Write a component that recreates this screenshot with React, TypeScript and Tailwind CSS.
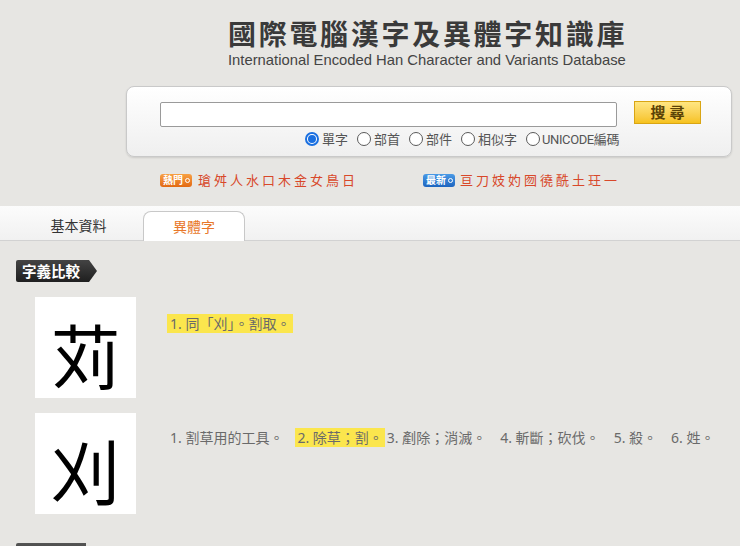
const CJK = "font-['Noto_Sans','Noto_Sans_CJK_TC',sans-serif]";

const HOT = ["瑲", "舛", "人", "水", "口", "木", "金", "女", "鳥", "日"];
const NEW = ["亘", "刀", "妓", "妁", "囫", "徺", "酰", "土", "玨", "一"];

function Radio({ checked, label }: { checked?: boolean; label: string }) {
  return (
    <label className="flex items-center mr-[9px]">
      {checked ? (
        <span className="w-[14px] h-[14px] rounded-full border-[2px] border-[#1a6fe0] bg-white flex items-center justify-center">
          <span className="w-[8px] h-[8px] rounded-full bg-[#1a6fe0]" />
        </span>
      ) : (
        <span className="w-[14px] h-[14px] rounded-full border border-[#5a5a5a] bg-white" />
      )}
      <span className="ml-[3px]">{label}</span>
    </label>
  );
}

function Badge({ text, color }: { text: string; color: "orange" | "blue" }) {
  const bg =
    color === "orange"
      ? "bg-gradient-to-b from-[#f7a043] to-[#e2690f]"
      : "bg-gradient-to-b from-[#4a9ae6] to-[#1d64bf]";
  return (
    <span className={`flex items-center h-[13px] rounded-[3px] pl-[3px] pr-[2px] ${bg}`}>
      <span className="text-[10px] leading-[13px] font-bold text-white">{text}</span>
      <span className="ml-[2px] w-[5px] h-[5px] rounded-full border border-white" />
    </span>
  );
}

function SectionLabel({ text }: { text: string }) {
  return (
    <div className="flex items-stretch h-[22px] ml-[16px]">
      <div className="bg-gradient-to-b from-[#444] to-[#1f1f1f] rounded-l-[2px] pl-[6px] pr-[8px] flex items-center">
        <span className="text-white text-[14.5px] font-bold leading-none">{text}</span>
      </div>
      <svg width="9" height="22" viewBox="0 0 9 22" className="block">
        <defs>
          <linearGradient id="lg" x1="0" y1="0" x2="0" y2="1">
            <stop offset="0" stopColor="#444" />
            <stop offset="1" stopColor="#1f1f1f" />
          </linearGradient>
        </defs>
        <path d="M0 0 H1 L9 11 L1 22 H0 Z" fill="url(#lg)" />
      </svg>
    </div>
  );
}

function GlyphBox({ ch }: { ch: string }) {
  return (
    <div className="w-[101px] h-[101px] bg-white flex items-center justify-center shrink-0">
      <span className="text-[70px] leading-none font-normal text-black mt-[12px] font-['Noto_Sans_CJK_JP','Noto_Sans_CJK_TC',sans-serif]">
        {ch}
      </span>
    </div>
  );
}

export default function App() {
  return (
    <div className={`min-h-screen bg-[#e7e6e3] ${CJK} overflow-hidden`}>
      {/* header */}
      <div className="pt-[20px] pl-[228px]">
        <div className="text-[28px] leading-[28px] font-bold tracking-[2.7px] text-[#3a3a3a] whitespace-nowrap">
          國際電腦漢字及異體字知識庫
        </div>
        <div className="mt-[4px] text-[14.8px] leading-[16px] text-[#444] font-['Liberation_Sans',Arial,sans-serif] whitespace-nowrap">
          International Encoded Han Character and Variants Database
        </div>
      </div>

      {/* search panel */}
      <div className="ml-[126px] mt-[18px] w-[606px] h-[71px] rounded-[8px] border border-[#c9c9c9] bg-gradient-to-b from-white to-[#efefef] shadow-[0_1px_2px_rgba(0,0,0,0.12)]">
        <div className="flex items-start pl-[33px] pt-[15px]">
          <div className="w-[457px] h-[25px] bg-white border border-[#9a9a9a] rounded-[2px]" />
          <button className="ml-[17px] -mt-[1px] w-[67px] h-[23px] border border-[#d9a514] bg-gradient-to-b from-[#ffe680] to-[#f6c21a] text-[15px] leading-none font-bold text-[#5b4306] tracking-[4px] pl-[4px]">
            搜尋
          </button>
        </div>
        <div className="flex items-center pl-[178px] mt-[4px] h-[16px] text-[13px] leading-none text-[#555]">
          <Radio checked label="單字" />
          <Radio label="部首" />
          <Radio label="部件" />
          <Radio label="相似字" />
          <label className="flex items-center">
            <span className="w-[14px] h-[14px] rounded-full border border-[#5a5a5a] bg-white" />
            <span className="ml-[2px] font-['Roboto','Noto_Sans_CJK_TC',sans-serif] tracking-[-0.4px]">UNICODE編碼</span>
          </label>
        </div>
      </div>

      {/* hot / new */}
      <div className="flex items-center h-[14px] mt-[16px] pl-[160px] text-[13px] leading-none text-[#d8482a]">
        <Badge text="熱門" color="orange" />
        <div className="flex gap-[3px] ml-[6px]">
          {HOT.map((c, i) => (
            <span key={i} className="w-[13px] text-center">{c}</span>
          ))}
        </div>
        <div className="ml-[68px]">
          <Badge text="最新" color="blue" />
        </div>
        <div className="flex gap-[3px] ml-[5px]">
          {NEW.map((c, i) => (
            <span key={i} className="w-[13px] text-center">{c}</span>
          ))}
        </div>
      </div>

      {/* tabs */}
      <div className="mt-[19px] h-[35px] bg-gradient-to-b from-[#fcfcfc] to-[#f1f1f1] border-b border-[#d2d2d2] flex items-end pl-[14px]">
        <div className="w-[129px] h-[30px] flex items-center justify-center text-[14px] text-[#333]">基本資料</div>
        <div className="w-[102px] h-[30px] -mb-px bg-white border border-b-0 border-[#c8c8c8] rounded-t-[8px] flex items-center justify-center text-[14px] text-[#e8772a]">
          異體字
        </div>
      </div>

      {/* content */}
      <div className="mt-[19px]">
        <SectionLabel text="字義比較" />

        <div className="flex items-start mt-[15px] pl-[35px]">
          <GlyphBox ch="苅" />
          <div className="ml-[31px] mt-[17px] text-[14px] leading-[19px] text-[#6a6a6a]">
            <span className="bg-[#fbe64d] px-[3px]">1. 同「刈」。割取。</span>
          </div>
        </div>

        <div className="flex items-start mt-[15px] pl-[35px]">
          <GlyphBox ch="刈" />
          <div className="ml-[31px] mt-[15px] text-[14px] leading-[19px] text-[#6a6a6a] flex items-start whitespace-nowrap">
            <span className="px-[3px] mr-[9px]">1. 割草用的工具。</span>
            <span className="px-[2px] bg-[#fbe64d]">2. 除草；割。</span>
            <span className="px-[2px] mr-[10px]">3. 剷除；消滅。</span>
            <span className="px-[2px] mr-[10px]">4. 斬斷；砍伐。</span>
            <span className="px-[2px] mr-[10px]">5. 殺。</span>
            <span className="px-[2px]">6. 姓。</span>
          </div>
        </div>

        <div className="mt-[29px] ml-[16px] w-[70px] h-[22px] bg-gradient-to-b from-[#555] to-[#2a2a2a] rounded-l-[2px]" />
      </div>
    </div>
  );
}
